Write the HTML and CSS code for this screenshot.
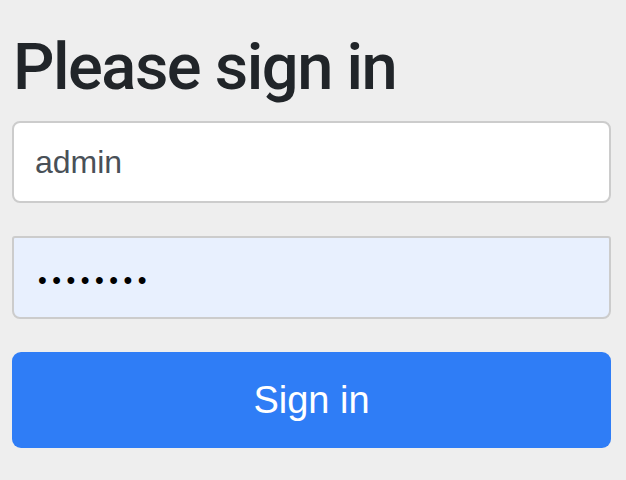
FILE: index.html
```html
<!DOCTYPE html>
<html lang="en">
<head>
<meta charset="utf-8">
<title>Please sign in</title>
<link rel="stylesheet" href="styles.css">
</head>
<body>
<div class="container">
  <form class="form-signin">
    <h2 class="form-signin-heading">Please sign in</h2>
    <input type="text" class="form-control" value="admin">
    <input type="password" class="form-control autofill" value="password">
    <button type="button" class="btn-primary">Sign in</button>
  </form>
</div>
</body>
</html>
```
FILE: styles.css
```css
html, body {
  margin: 0;
  padding: 0;
  background: #eeeeee;
}
body {
  font-family: "Liberation Sans", Arial, Helvetica, sans-serif;
}
.container {
  padding: 0 15px 0 12px;
}
.form-signin {
  display: flex;
  flex-direction: column;
}
.form-signin-heading {
  margin: 27px 0 14px 0;
  padding-left: 1px;
  font-family: Roboto, "Liberation Sans", Arial, sans-serif;
  font-size: 65px;
  line-height: 80px;
  font-weight: 500;
  color: #212529;
  letter-spacing: -1.5px;
}
.form-control {
  box-sizing: border-box;
  display: block;
  width: 100%;
  height: 82px;
  margin: 0;
  padding: 0 20px 0 21px;
  font-family: "Liberation Sans", Arial, Helvetica, sans-serif;
  font-size: 32px;
  color: #495057;
  background: #ffffff;
  border: 2px solid #cccccc;
  border-radius: 8px;
  outline: none;
}
.form-control + .form-control {
  margin-top: 33px;
  height: 83px;
}
.autofill {
  background: #e8f0fe;
  color: #000000;
  border-radius: 3px 3px 8px 8px;
  font-size: 25px;
  letter-spacing: 5.5px;
  padding-left: 24px;
  padding-top: 6px;
}
.btn-primary {
  box-sizing: border-box;
  margin-top: 33px;
  width: 100%;
  height: 96px;
  border: none;
  border-radius: 9px;
  background: #2f7df6;
  color: #ffffff;
  font-family: "Liberation Sans", Arial, Helvetica, sans-serif;
  font-size: 38px;
  padding: 0;
}
```
